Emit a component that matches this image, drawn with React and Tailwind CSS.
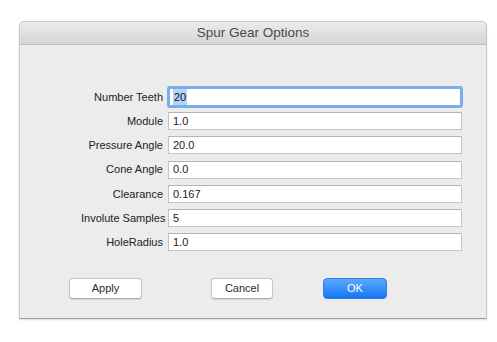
import React from 'react';

const fields = [
  ['Number Teeth', '20'],
  ['Module', '1.0'],
  ['Pressure Angle', '20.0'],
  ['Cone Angle', '0.0'],
  ['Clearance', '0.167'],
  ['Involute Samples', '5'],
  ['HoleRadius', '1.0'],
];

const App = () => {
  return (
    <div className="w-[497px] h-[342px] bg-white pt-[21px] pl-[19px]" style={{ fontFamily: '"Liberation Sans", Arial, sans-serif' }}>
      <div className="w-[468px] h-[298px] flex flex-col rounded-t-[5px] border border-[#c9c9c9] border-b-[#9f9f9f] bg-[#ececec] shadow-[0_1px_2px_rgba(0,0,0,0.15)]">

        {/* Title bar */}
        <div className="h-[23px] flex items-center justify-center rounded-t-[5px] bg-gradient-to-b from-[#ebebeb] to-[#d5d5d5] border-b border-[#bfbfbf]">
          <span className="text-[13.5px] text-[#4a4a4a]">Spur Gear Options</span>
        </div>

        {/* Form */}
        <div className="flex flex-col gap-[6.2px] pt-[43px] pl-[61px]">
          {fields.map(([label, value], i) => (
            <div key={label} className="flex items-center h-[18px]">
              <div className="w-[87px] text-right text-[11px] text-[#222] pr-[5px] whitespace-nowrap">{label}</div>
              {i === 0 ? (
                <div className="w-[296px] h-[22px] -my-[2px] -ml-[1px] flex items-center bg-white border-[3px] border-[#7cacea] rounded-[3px] pl-[3px] text-[11px] text-[#111]">
                  <span className="bg-[#b3d3fb] px-[1px]">{value}</span>
                </div>
              ) : (
                <div className="w-[294px] h-[18px] flex items-center bg-white border border-[#c4c4c4] border-t-[#b4b4b4] pl-[4px] text-[11px] text-[#222]">
                  {value}
                </div>
              )}
            </div>
          ))}
        </div>

        {/* Buttons */}
        <div className="flex items-center pt-[27px] pl-[49px]">
          <button className="w-[73px] h-[21px] rounded-[4px] bg-white border border-[#c6c6c6] border-b-[#acacac] text-[11px] text-[#2b2b2b] shadow-[0_0.5px_1px_rgba(0,0,0,0.1)]">Apply</button>
          <button className="ml-[69px] w-[62px] h-[21px] rounded-[4px] bg-white border border-[#c6c6c6] border-b-[#acacac] text-[11px] text-[#2b2b2b] shadow-[0_0.5px_1px_rgba(0,0,0,0.1)]">Cancel</button>
          <button className="ml-[50px] w-[64px] h-[21px] rounded-[4px] bg-gradient-to-b from-[#5aa8fb] to-[#0f76f6] border border-[#2b7ee8] text-[11px] text-white">OK</button>
        </div>
      </div>
    </div>
  );
};

export default App;
